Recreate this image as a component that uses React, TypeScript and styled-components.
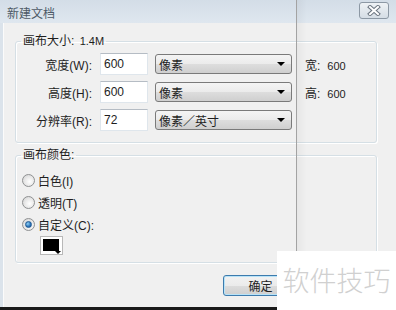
import styled, { createGlobalStyle } from "styled-components";

import type { FC } from "react";

const GlobalStyle = createGlobalStyle`
  html, body {
    margin: 0;
    padding: 0;
    background: #1a1a1a;
  }
  body {
    font-family: "Liberation Sans", "Noto Sans CJK SC", sans-serif;
    font-size: 12px;
    color: #1e1e1e;
  }
`;

type SizeRow = {
  label: string;
  value: string;
  unit: string;
  info?: [string, string];
};

const sizeRows: SizeRow[] = [
  { label: "宽度(W):", value: "600", unit: "像素", info: ["宽:", "600"] },
  { label: "高度(H):", value: "600", unit: "像素", info: ["高:", "600"] },
  { label: "分辨率(R):", value: "72", unit: "像素／英寸" },
];

const colorOptions = [
  { label: "白色(I)", checked: false },
  { label: "透明(T)", checked: false },
  { label: "自定义(C):", checked: true },
];

const CloseIcon: FC = () => (
  <svg width="14" height="11" viewBox="0 0 14 11">
    <path d="M3 2 L11 9 M11 2 L3 9" stroke="#6b7580" strokeWidth="4" strokeLinecap="square" />
    <path d="M3 2 L11 9 M11 2 L3 9" stroke="#ffffff" strokeWidth="2" strokeLinecap="square" />
  </svg>
);

const App: FC = () => {
  return (
    <>
      <GlobalStyle />
      <Screen>
        <Window>
          <TitleBar>
            <Title>新建文档</Title>
            <CloseButton>
              <CloseIcon />
            </CloseButton>
          </TitleBar>
          <Body>
            <Group>
              <Legend>
                画布大小: <small>1.4M</small>
              </Legend>
              <Rows>
                {sizeRows.map((row) => (
                  <Row key={row.label}>
                    <FieldLabel>{row.label}</FieldLabel>
                    <TextBox>{row.value}</TextBox>
                    <Select>
                      <span>{row.unit}</span>
                      <Arrow />
                    </Select>
                    {row.info && (
                      <Info>
                        {row.info[0]}
                        <InfoValue>{row.info[1]}</InfoValue>
                      </Info>
                    )}
                  </Row>
                ))}
              </Rows>
            </Group>
            <ColorGroup>
              <Legend>画布颜色:</Legend>
              <RadioList>
                {colorOptions.map((opt) => (
                  <RadioRow key={opt.label}>
                    <Radio $checked={opt.checked} />
                    {opt.label}
                  </RadioRow>
                ))}
                <Swatch>
                  <SwatchFill />
                  <SwatchArrow />
                </Swatch>
              </RadioList>
            </ColorGroup>
            <Buttons>
              <Button>确定</Button>
            </Buttons>
          </Body>
          <Divider />
        </Window>
        <Watermark>软件技巧</Watermark>
      </Screen>
    </>
  );
};

export default App;

const Screen = styled.div`
  position: relative;
  width: 396px;
  height: 310px;
  overflow: hidden;
  background: #1a1a1a;
`;

const Window = styled.div`
  position: relative;
  width: 396px;
  height: 307px;
  display: flex;
  flex-direction: column;
  background: #f0f0f0;
`;

const TitleBar = styled.div`
  height: 23px;
  flex: none;
  display: flex;
  align-items: center;
  justify-content: space-between;
  padding: 0 7px 0 7px;
  background: linear-gradient(#d3dde7, #dfe7ef);
  box-sizing: border-box;
`;

const Title = styled.div`
  font-size: 12px;
  color: #4d5966;
  margin-top: 1px;
`;

const CloseButton = styled.div`
  width: 30px;
  height: 17px;
  margin-top: -2px;
  box-sizing: border-box;
  border: 1px solid #8c98a4;
  border-radius: 3px;
  background: linear-gradient(#eef2f5, #d5dde5);
  display: flex;
  align-items: center;
  justify-content: center;
`;

const Body = styled.div`
  flex: 1;
  display: flex;
  flex-direction: column;
  padding: 11px 19px 0 12px;
  border-left: 3px solid #dbe3eb;
  box-shadow: inset 1px 0 0 #fbfbfb;
`;

const Group = styled.fieldset`
  margin: 0;
  padding: 0 0 11px 0;
  border: 1px solid #d5dfe5;
  border-radius: 3px;
  box-shadow: inset 1px 1px 0 #ffffff, 1px 1px 0 #ffffff;
`;

const ColorGroup = styled(Group)`
  margin-top: 5px;
  padding-bottom: 7px;
`;

const Legend = styled.legend`
  margin-left: 5px;
  padding: 0 2px;
  font-size: 12px;
  line-height: 14px;
  color: #1e1e1e;

  small {
    font-size: 11px;
    margin-left: 2px;
  }
`;

const Rows = styled.div`
  display: flex;
  flex-direction: column;
  gap: 6px;
  padding-top: 5px;
`;

const Row = styled.div`
  display: flex;
  align-items: center;
  height: 22px;
`;

const FieldLabel = styled.div`
  width: 76px;
  margin-right: 8px;
  text-align: right;
`;

const TextBox = styled.div`
  width: 48px;
  height: 22px;
  box-sizing: border-box;
  margin-right: 7px;
  padding: 3px 0 0 3px;
  background: #ffffff;
  border: 1px solid #dfe6ec;
  border-top-color: #b5bcc4;
  line-height: 15px;
`;

const Select = styled.div`
  width: 137px;
  height: 20px;
  box-sizing: border-box;
  margin-right: 13px;
  padding: 0 6px 0 3px;
  display: flex;
  align-items: center;
  justify-content: space-between;
  border: 1px solid #7a7a7a;
  border-radius: 3px;
  background: linear-gradient(#f4f4f4 0%, #ebebeb 50%, #dddddd 51%, #cfcfcf 100%);
`;

const Arrow = styled.span`
  width: 0;
  height: 0;
  border-left: 4px solid transparent;
  border-right: 4px solid transparent;
  border-top: 4px solid #000000;
`;

const Info = styled.div`
  white-space: nowrap;
`;

const InfoValue = styled.span`
  margin-left: 7px;
  font-size: 11px;
`;

const RadioList = styled.div`
  display: flex;
  flex-direction: column;
  padding: 7px 0 0 6px;
`;

const RadioRow = styled.div`
  display: flex;
  align-items: center;
  height: 22px;
  gap: 3px;
`;

const Radio = styled.span<{ $checked: boolean }>`
  width: 13px;
  height: 13px;
  box-sizing: border-box;
  border-radius: 50%;
  border: 1px solid #8f9192;
  background: radial-gradient(circle at 60% 60%, #ffffff 0%, #e6e6e6 55%, #cfcfcf 100%);
  display: flex;
  align-items: center;
  justify-content: center;

  &::after {
    content: "";
    display: ${(p) => (p.$checked ? "block" : "none")};
    width: 5px;
    height: 5px;
    border-radius: 50%;
    background: radial-gradient(circle at 35% 35%, #8fd0f5 0%, #2c74b8 60%, #1b4f8a 100%);
    border: 1px solid #1f5a95;
  }
`;

const Swatch = styled.div`
  position: relative;
  width: 23px;
  height: 19px;
  box-sizing: border-box;
  margin: 1px 0 0 18px;
  padding: 2px 3px 3px 2px;
  border: 1px solid #b8b8b8;
  background: #ffffff;
`;

const SwatchFill = styled.div`
  width: 100%;
  height: 100%;
  background: #000000;
`;

const SwatchArrow = styled.span`
  position: absolute;
  right: 1px;
  bottom: 0;
  width: 0;
  height: 0;
  border-left: 3px solid transparent;
  border-right: 3px solid transparent;
  border-top: 3px solid #000000;
`;

const Buttons = styled.div`
  display: flex;
  justify-content: flex-end;
  margin-top: 12px;
  padding-right: 79px;
`;

const Button = styled.div`
  width: 75px;
  height: 21px;
  box-sizing: border-box;
  display: flex;
  align-items: center;
  justify-content: center;
  border: 1px solid #3d7bad;
  border-radius: 3px;
  background: linear-gradient(#f2f2f2 0%, #ebebeb 50%, #dddddd 51%, #cfcfcf 100%);
  box-shadow: inset 0 0 0 1px #b8e3f8;
`;

const Divider = styled.div`
  position: absolute;
  top: 0;
  bottom: 0;
  left: 296px;
  width: 10px;
  border-left: 1px solid #a3a3a3;
  background: linear-gradient(to right, rgba(0, 0, 0, 0.04), rgba(0, 0, 0, 0));
  pointer-events: none;
`;

const Watermark = styled.div`
  position: absolute;
  right: 0;
  bottom: 0;
  width: 119px;
  height: 59px;
  background: #ffffff;
  display: flex;
  align-items: center;
  justify-content: center;
  padding-bottom: 2px;
  box-sizing: border-box;
  font-family: "Noto Sans CJK SC", sans-serif;
  font-weight: 300;
  font-size: 27px;
  color: #d0d0d0;
`;
